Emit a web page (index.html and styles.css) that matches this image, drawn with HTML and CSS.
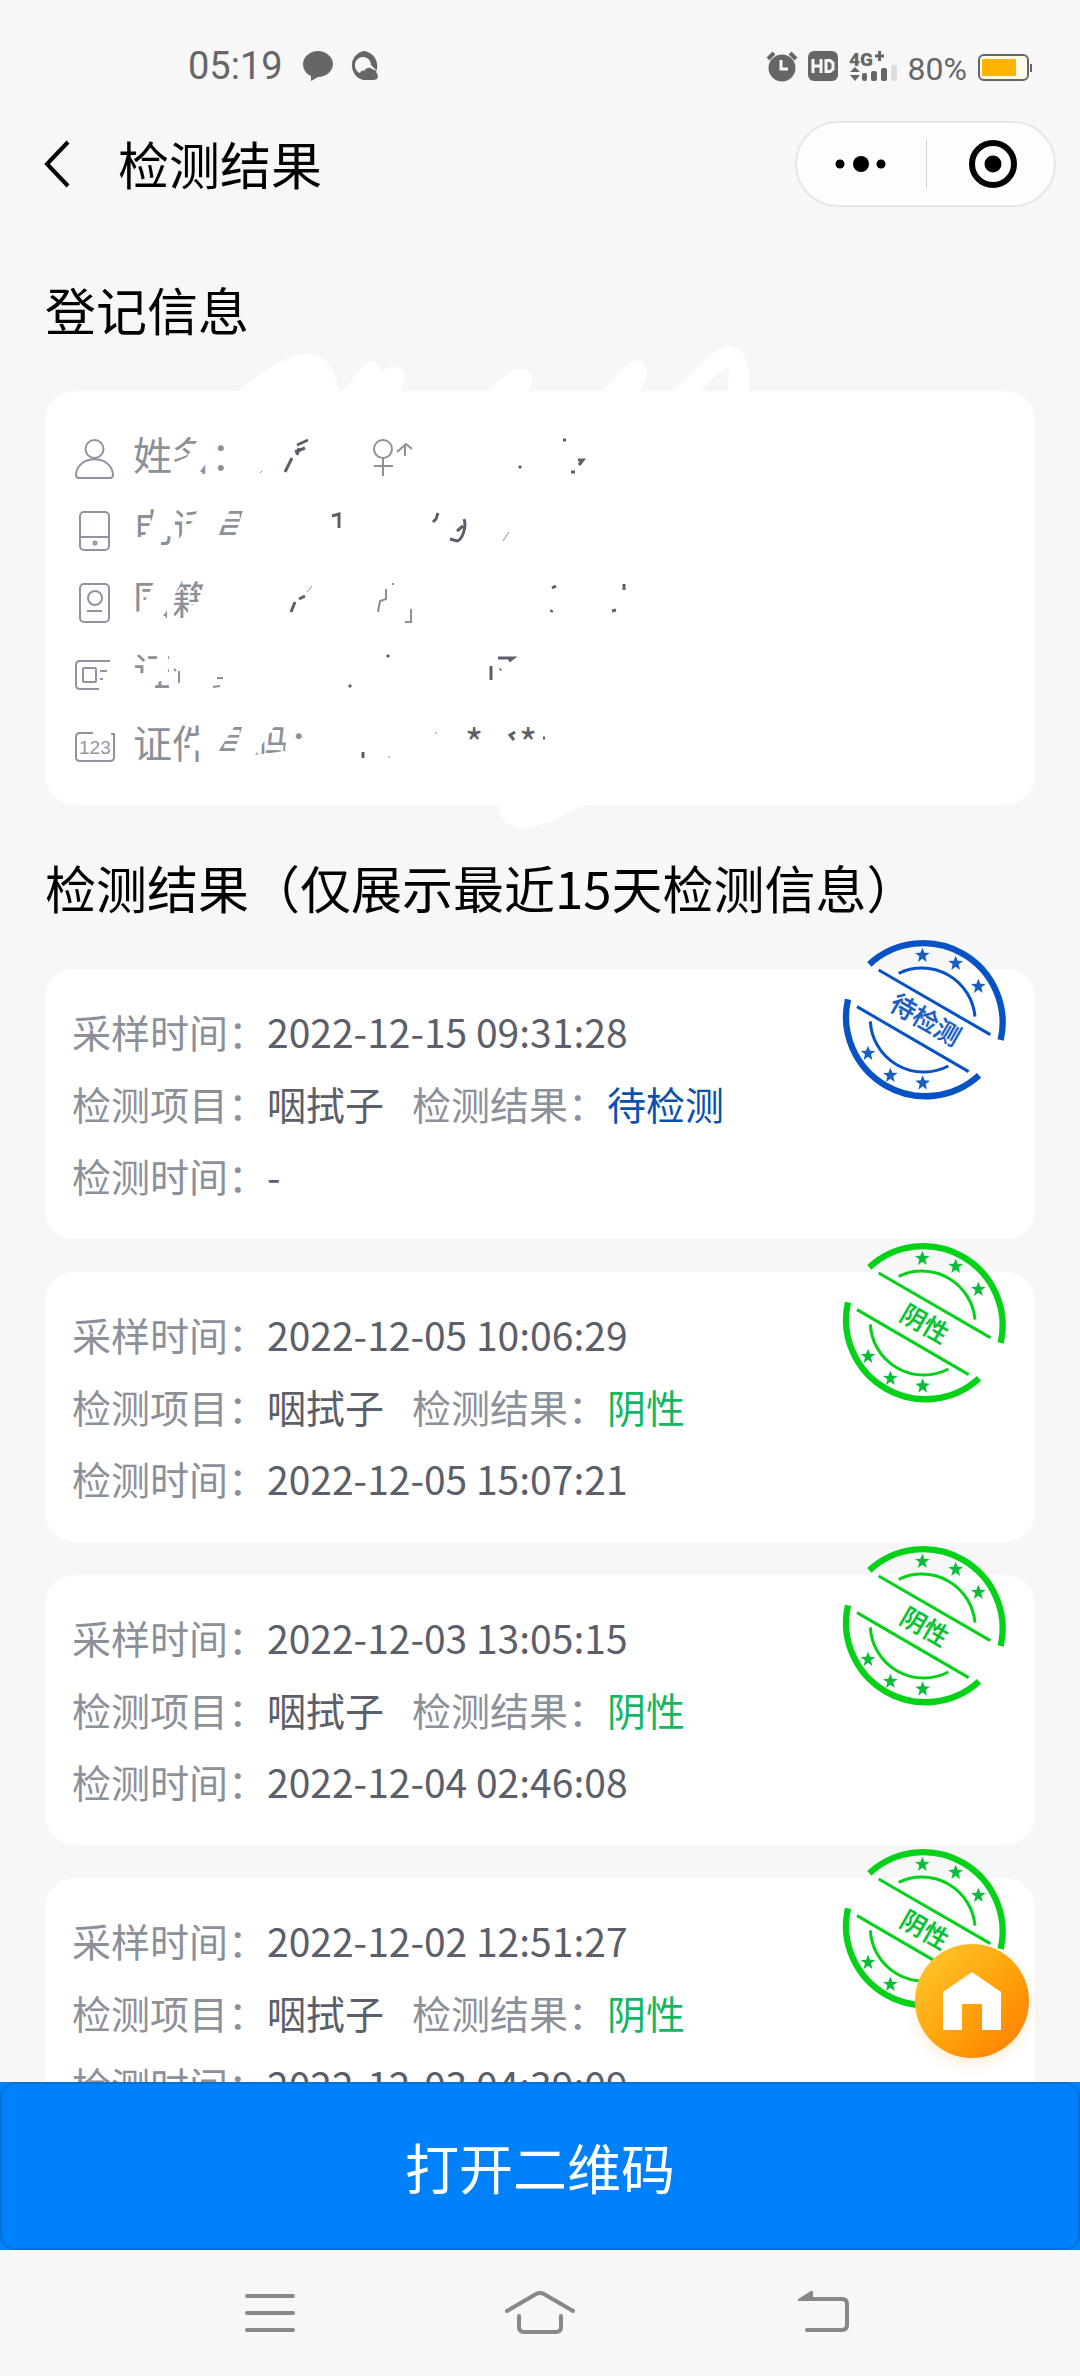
FILE: index.html
```html
<!DOCTYPE html>
<html lang="zh-CN">
<head>
<meta charset="utf-8">
<meta name="viewport" content="width=device-width, initial-scale=1">
<title>检测结果</title>
<link rel="stylesheet" href="styles.css">
</head>
<body>
<svg class="defs" aria-hidden="true">
  <defs>
    <path id="star" d="M0-23 6-8 22-7 9 3 13 20 0 10-13 20-9 3-22-7-6-8z"/>
    <g id="stamp">
      <g fill="none" stroke="currentColor">
        <path stroke-width="19" d="M147 135A238 238 0 0 1 541 362M83 240A238 238 0 0 0 476 468"/>
        <path stroke-width="9" d="M235 162A160 160 0 0 1 464 292M150 306A160 160 0 0 0 384 440M175 152 510 346M110 262 445 457"/>
      </g>
      <g>
        <use href="#star" x="306" y="108"/><use href="#star" x="406" y="132"/><use href="#star" x="474" y="201"/>
        <use href="#star" x="143" y="402"/><use href="#star" x="210" y="468"/><use href="#star" x="307" y="491"/>
      </g>
    </g>
  </defs>
</svg>
<div class="app">
  <div class="status">
    <div class="status-group">
      <span class="clock">05:19</span>
      <svg class="status-chat" width="30" height="30" viewBox="0 0 30 30" fill="currentColor"><path d="M15 0c8 0 15 6 15 13s-7 13-15 13l-7 4v-5C3 23 0 18 0 13 0 6 7 0 15 0z"/></svg>
      <svg width="30" height="30" viewBox="0 0 30 30"><path fill="currentColor" d="M15 0a15 15 0 0 1 13 21q2 2 2 5-1 3-5 3H15A15 15 0 0 1 15 0z"/><path fill="#f7f7f7" d="M15 6c5 0 8 4 8 8l6 6-5-2c-3-3-7 0-8 2-2-1-3 0-4 2-3-1-5-4-5-8 0-5 4-8 8-8z"/></svg>
    </div>
    <div class="status-group">
      <svg width="30" height="30" viewBox="0 0 30 30"><circle cx="15" cy="17" r="13.500" fill="currentColor"/><path d="M1 8 7 2M29 8 23 2" stroke="currentColor" stroke-width="4"/><path d="M14 9V18H21" fill="none" stroke="#f7f7f7" stroke-width="3"/></svg>
      <svg width="30" height="30" viewBox="0 0 30 30"><rect width="30" height="30" rx="6" fill="currentColor"/><path d="M5 8V22M13 8V22M5 15H13M18 9.500H22L25 12V18L22 20.500H18z" fill="none" stroke="#f7f7f7" stroke-width="3"/></svg>
      <svg class="signal" width="48" height="30" viewBox="0 0 48 30"><text class="signal-text" x="0" y="15">4G</text><path d="M26 5H35M30.500 0V10" stroke="currentColor" stroke-width="3"/><path fill="currentColor" d="M1 21 6 16 11 21zM1 24H11L6 30z"/><rect x="13" y="22" width="5" height="8" rx="2" fill="currentColor"/><rect x="22" y="20" width="6" height="10" rx="2" fill="currentColor"/><rect x="32" y="17" width="6" height="13" rx="2" fill="currentColor"/><rect x="42" y="14" width="6" height="16" rx="2" fill="#ddd"/></svg>
      <span class="percent">80%</span>
      <svg class="battery" width="54" height="28" viewBox="0 0 54 28"><rect x="1" y="1" width="49" height="25" rx="5" fill="#fffbe8" stroke="currentColor" stroke-width="2"/><rect x="4" y="5" width="34" height="17" rx="1" fill="#ffb300"/><path d="M53 10V18" stroke="currentColor" stroke-width="2"/></svg>
    </div>
  </div>

  <header class="header">
    <button class="plain" type="button" aria-label="返回"><svg width="24" height="46" viewBox="0 0 24 46" fill="none" stroke="#000" stroke-width="4"><path d="M23 1 2 23 23 45"/></svg></button>
    <h1 class="title">检测结果</h1>
    <div class="capsule">
      <button class="plain capsule-btn" type="button" aria-label="更多"><svg width="52" height="16" viewBox="0 0 52 16"><circle cx="5" cy="8" r="4.500"/><circle cx="26" cy="8" r="8"/><circle cx="46" cy="8" r="4.500"/></svg></button>
      <button class="plain capsule-btn" type="button" aria-label="关闭"><svg width="48" height="48" viewBox="0 0 48 48"><circle cx="24" cy="24" r="21" fill="none" stroke="#000" stroke-width="6"/><circle cx="24" cy="24" r="8.500"/></svg></button>
    </div>
  </header>

  <main class="main">
    <h2 class="section">登记信息</h2>
    <section class="card">
      <div class="row"><svg class="icon" viewBox="0 0 40 40"><circle cx="19.500" cy="10" r="9"/><path d="M1 36C2 15 37 15 38 36q0 3-3 3H4q-3 0-3-3z"/></svg><span class="label">姓名：</span></div>
      <div class="row"><svg class="icon" viewBox="0 0 40 40"><rect x="5" y="1" width="29" height="38" rx="4"/><path d="M5 26H34"/><circle cx="20" cy="32" r="1.500"/></svg><span class="label">电话号码</span></div>
      <div class="row"><svg class="icon" viewBox="0 0 40 40"><rect x="5" y="1" width="29" height="38" rx="4"/><circle cx="20" cy="15" r="7"/><path d="M12 28H27"/></svg><span class="label">国籍</span></div>
      <div class="row"><svg class="icon" viewBox="0 0 40 40"><path d="M35 6H5Q1 6 1 10V30Q1 34 5 34H24M25 16H32M25 24H28"/><rect x="8" y="13" width="13" height="14" rx="1"/></svg><span class="label">证件类型</span></div>
      <div class="row"><svg class="icon" viewBox="0 0 40 40"><path d="M18 6H5Q1 6 1 10V30Q1 34 5 34H35Q39 34 39 30V7H36"/><text class="icon-text" x="4" y="27">123</text></svg><span class="label">证件号码：</span></div>

      <svg class="scribble" width="800" height="500" viewBox="0 340 800 500" aria-hidden="true">
        <g fill="#fff">
          <path d="M237 393C260 375 285 355 308 355 328 355 337 374 338 393zM342 393C352 382 364 363 371 362Q380 363 380 374 390 366 397 368 408 372 404 383L400 393zM487 393Q512 368 522 370 535 373 531 385L528 393zM603 393Q628 361 638 361 648 364 646 378L641 393zM672 393C690 378 714 347 728 347 744 348 750 360 749 393H728L729 368Q714 374 700 393zM498 804C498 820 508 829 522 829 545 829 560 815 592 804z"/>
          <path d="M173 464 187 458 197 442 205 440 207 463 199 474V480H171z"/>
          <path d="M155 508H175V527L161 542V550H133V538H144L152 520zM199 507H232L218 536 235 537 244 508H300V553H177V544L185 530 193 522z"/>
          <path d="M155 580H183L174 597V620H167V611L163 617V624H133V614L140 612 144 603 148 597zM205 580H215V624H188V608L198 603z"/>
          <path d="M157 650V660L147 662 144 674 133 675V695H155V687L160 682H168V650zM169 650H300V695H169z"/>
          <path d="M199 722H238L218 753 234 754 244 722H278L255 756 285 752 286 742H305V780H199zM192 738 199 736V752L189 750z"/>
        </g>
        <g class="mark mark-gray">
          <circle cx="383" cy="450" r="9"/><path d="M383 459V477M374 467H393M397 453 406 445 412 450M405 447V457"/>
          <path d="M378 613 380 602 386 600V590M392 585H394M405 623H411V610M174 670 176 672M179 672V684M213 688 220 687M217 679H223"/>
        </g>
        <g class="mark">
          <path d="M285 473 292 459M295 453 305 449M297 446 308 441M299 449 297 456M563 441H566M519 469 521 467M578 461H583L579 466M571 473H575"/>
          <path d="M332 517 339 515V529M438 514 436 520 433 523M464 520C467 528 462 541 457 542L450 540M457 532 463 527"/>
          <path d="M291 613 295 603M299 600 305 597M552 589 556 587M624 585V591M612 612 616 611M551 613 552 611"/>
          <path d="M387 658 389 656M349 688 351 686M498 659H513L509 662M491 667V681M501 670 500 671M493 662V662M363 753V759M515 733 510 736 514 741M543 739H545"/>
        </g>
        <path class="hair" d="M503 542 509 533M312 587 307 593M262 472 260 474M435 735 437 733M388 758H390"/>
        <text class="mark-text" x="465" y="759">*</text><text class="mark-text" x="519" y="759">*</text>
      </svg>
    </section>

    <h2 class="section">检测结果（仅展示最近15天检测信息）</h2>
    <div class="list">
      <section class="card">
        <div class="row"><span class="label">采样时间：</span><span>2022-12-15 09:31:28</span></div>
        <div class="row"><span class="label">检测项目：</span><span>咽拭子</span><span class="label second">检测结果：</span><span class="pending">待检测</span></div>
        <div class="row"><span class="label">检测时间：</span><span>-</span></div>
        <svg class="stamp stamp-blue" viewBox="68 59 486 486"><use href="#stamp"/><text x="315" y="329" transform="rotate(30 315 303)">待检测</text></svg>
      </section>
      <section class="card">
        <div class="row"><span class="label">采样时间：</span><span>2022-12-05 10:06:29</span></div>
        <div class="row"><span class="label">检测项目：</span><span>咽拭子</span><span class="label second">检测结果：</span><span class="negative">阴性</span></div>
        <div class="row"><span class="label">检测时间：</span><span>2022-12-05 15:07:21</span></div>
        <svg class="stamp stamp-green" viewBox="68 59 486 486"><use href="#stamp"/><text x="312" y="332" transform="rotate(30 312 306)">阴性</text></svg>
      </section>
      <section class="card">
        <div class="row"><span class="label">采样时间：</span><span>2022-12-03 13:05:15</span></div>
        <div class="row"><span class="label">检测项目：</span><span>咽拭子</span><span class="label second">检测结果：</span><span class="negative">阴性</span></div>
        <div class="row"><span class="label">检测时间：</span><span>2022-12-04 02:46:08</span></div>
        <svg class="stamp stamp-green" viewBox="68 59 486 486"><use href="#stamp"/><text x="312" y="332" transform="rotate(30 312 306)">阴性</text></svg>
      </section>
      <section class="card">
        <div class="row"><span class="label">采样时间：</span><span>2022-12-02 12:51:27</span></div>
        <div class="row"><span class="label">检测项目：</span><span>咽拭子</span><span class="label second">检测结果：</span><span class="negative">阴性</span></div>
        <div class="row"><span class="label">检测时间：</span><span>2022-12-03 04:39:09</span></div>
        <svg class="stamp stamp-green" viewBox="68 59 486 486"><use href="#stamp"/><text x="312" y="332" transform="rotate(30 312 306)">阴性</text></svg>
      </section>
    </div>
    <button class="plain home" type="button" aria-label="首页"><svg width="58" height="58" viewBox="0 0 58 58" fill="#fff"><path d="M29 0 58 20V58H39V32H19V58H0V20z"/></svg></button>
  </main>

  <div class="action"><button class="action-btn" type="button">打开二维码</button></div>

  <nav class="nav">
    <button class="plain" type="button" aria-label="最近任务"><svg class="nav-icon" viewBox="0 0 84 60"><path d="M19 13H65M19 30H65M19 47H65"/></svg></button>
    <button class="plain" type="button" aria-label="主屏幕"><svg class="nav-icon" viewBox="0 0 84 60"><path d="M9 28 38 11Q42 9 46 11L75 28M21 33V44Q21 49 26 49H58Q63 49 63 44V33"/></svg></button>
    <button class="plain" type="button" aria-label="后退"><svg class="nav-icon" viewBox="0 0 84 60"><path d="M39 47H74Q79 47 79 42V21Q79 16 74 16H36"/><path class="nav-head" d="M30 16 43 8H45V18H30z"/></svg></button>
  </nav>
</div>
</body>
</html>
```
FILE: styles.css
```css
* { box-sizing: border-box; }

body {
  margin: 0;
  background: #f7f7f7;
  color: #000;
  font-family: "Noto Sans CJK SC", sans-serif;
}

svg { display: block; flex: none; overflow: visible; }

.defs { position: absolute; width: 0; height: 0; }

.plain {
  display: flex;
  align-items: center;
  justify-content: center;
  padding: 0;
  border: 0;
  background: none;
}

.app {
  display: flex;
  flex-direction: column;
  height: 100vh;
  overflow: hidden;
}

/* Status bar */
.status {
  display: flex;
  flex: none;
  justify-content: space-between;
  height: 110px;
  padding: 22px 48px 0 188px;
  color: #666;
  font-family: Roboto, sans-serif;
}
.status-group { display: flex; align-items: center; gap: 11px; }
.status-group:first-child { gap: 15px; }
.clock { font-size: 38px; }
.status-chat { margin-left: 5px; }
.signal-text { fill: currentColor; font-size: 19px; font-weight: 900; }
.percent { padding-top: 6px; font-size: 32px; }
.battery { margin-top: 4px; }

/* Title bar */
.header {
  display: flex;
  flex: none;
  align-items: center;
  height: 108px;
  padding: 0 24px 0 45px;
}
.title { flex: 1; margin: 0 0 0 49px; padding-bottom: 2px; font-size: 51px; line-height: 70px; font-weight: 400; }
.capsule {
  display: flex;
  width: 261px;
  height: 86px;
  border: 2px solid #e6e6e6;
  border-radius: 43px;
  background: #fdfdfd;
}
.capsule-btn { position: relative; width: 50%; }
.capsule-btn + .capsule-btn { padding-left: 6px; }
.capsule-btn + .capsule-btn::before {
  content: "";
  position: absolute;
  top: 16px;
  bottom: 16px;
  left: 0;
  width: 1px;
  background: #d8d8d8;
}

/* Scrolling content */
.main {
  position: relative;
  flex: 1;
  min-height: 0;
  padding: 9px 45px 0;
  overflow: hidden;
}
.section { margin: 46px 0; font-size: 51px; line-height: 72px; font-weight: 400; white-space: nowrap; }
.list { display: grid; gap: 33px; }
.card {
  position: relative;
  padding: 29px 27px 25px;
  border-radius: 30px;
  background: #fff;
}
.row {
  display: flex;
  align-items: center;
  height: 72px;
  padding-bottom: 6px;
  color: #5c5f6a;
  font-size: 39px;
  white-space: nowrap;
}
.label { color: #8c9099; }
.second { margin-left: 28px; }
.pending { color: #0b50b0; }
.negative { color: #12b861; }

.icon {
  width: 40px;
  height: 40px;
  margin: 12px 18px 0 3px;
  fill: none;
  stroke: #9094a0;
  stroke-width: 2;
}
.icon-text { fill: #9397a0; stroke: none; font-family: "Liberation Sans", sans-serif; font-size: 19px; }

.scribble { position: absolute; top: -52px; left: -45px; pointer-events: none; }
.mark { fill: none; stroke: #5c5f6a; stroke-width: 3; }
.mark-gray { stroke: #8c9099; stroke-width: 2; }
.hair { fill: none; stroke: #8c9099; stroke-width: 1; }
.mark-text { fill: #5c5f6a; font-size: 39px; }

.stamp { position: absolute; top: -30px; right: 30px; width: 162px; height: 162px; }
.stamp text { font-size: 76px; font-weight: 500; text-anchor: middle; stroke: currentColor; stroke-width: 1; }
.stamp-blue { color: #0753c6; fill: #1a5fbe; }
.stamp-green { color: #04d218; fill: #08bd38; }

.home {
  position: absolute;
  right: 51px;
  bottom: 24px;
  width: 114px;
  height: 114px;
  border-radius: 50%;
  background: linear-gradient(135deg, #ffcb32, #ffa50c 50%, #ff7a00);
  box-shadow: 0 6px 14px rgba(255, 140, 0, 0.16);
}

/* Bottom action and system keys */
.action { flex: none; background: #0081f9; }
.action-btn {
  display: block;
  width: 100%;
  height: 168px;
  border: 2px solid #0070d8;
  border-radius: 15px;
  background: #0081f9;
  color: #fff;
  font: inherit;
  font-size: 54px;
}
.nav {
  display: flex;
  flex: none;
  justify-content: center;
  gap: 186px;
  height: 126px;
}
.nav-icon { width: 84px; height: 60px; fill: none; stroke: #888; stroke-width: 4; stroke-linecap: round; }
.nav-head { fill: #888; stroke: none; }
```
